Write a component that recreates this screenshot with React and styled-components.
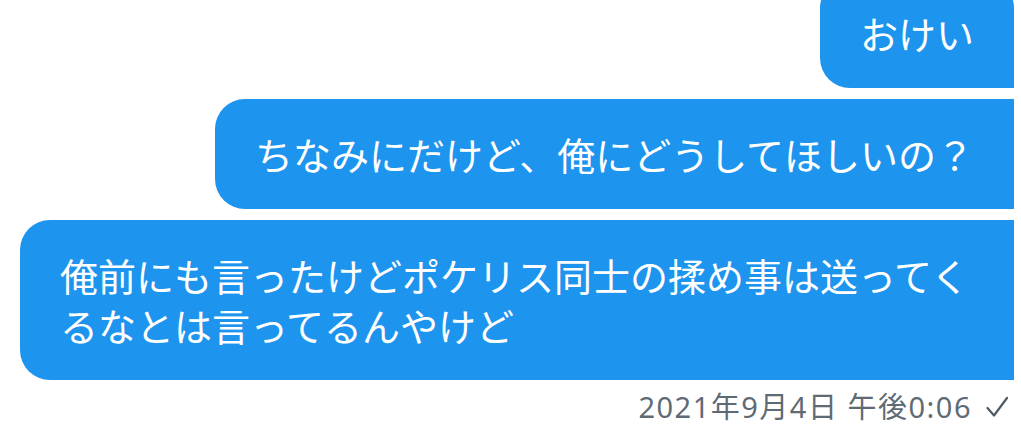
import React from "react";
import styled, { createGlobalStyle } from "styled-components";

const Global = createGlobalStyle`
  html, body {
    margin: 0;
    padding: 0;
    background: #ffffff;
    overflow: hidden;
  }
`;

const Thread = styled.section`
  display: flex;
  flex-direction: column;
  align-items: flex-end;
  gap: 11px;
  margin-top: -22px;
  padding: 0 7px 0 20px;
  font-family: "Noto Sans", "Noto Sans CJK JP", sans-serif;
`;

const Bubble = styled.div`
  background-color: #1d94ee;
  color: #ffffff;
  font-family: "Noto Sans CJK JP", sans-serif;
  font-size: 38px;
  line-height: 50px;
  padding: 30px 40px;
  border-radius: ${(p) => (p.$first ? "30px 30px 0 30px" : "30px 0 0 30px")};
  box-sizing: border-box;
  max-width: 100%;
`;

const Meta = styled.div`
  display: flex;
  align-items: center;
  gap: 14px;
  margin-top: -3px;
  padding-right: 6px;
  color: #5f6b74;
  font-size: 29px;
  line-height: 38px;
  letter-spacing: 1.5px;
`;

const Check = () => (
  <svg width="22" height="22" viewBox="0 0 22 22" fill="none">
    <path d="M1.5 12 L8 19.5 L21 2" stroke="#4f5a63" strokeWidth="2.2" strokeLinecap="round" strokeLinejoin="round" />
  </svg>
);

const messages = [
  "おけい",
  "ちなみにだけど、俺にどうしてほしいの？",
  "俺前にも言ったけどポケリス同士の揉め事は送ってくるなとは言ってるんやけど",
];

export default function App() {
  return (
    <>
      <Global />
      <Thread>
        {messages.map((m, i) => (
          <Bubble key={i} $first={i === 0}>
            {m}
          </Bubble>
        ))}
        <Meta>
          <span>2021年9月4日 午後0:06</span>
          <Check />
        </Meta>
      </Thread>
    </>
  );
}
